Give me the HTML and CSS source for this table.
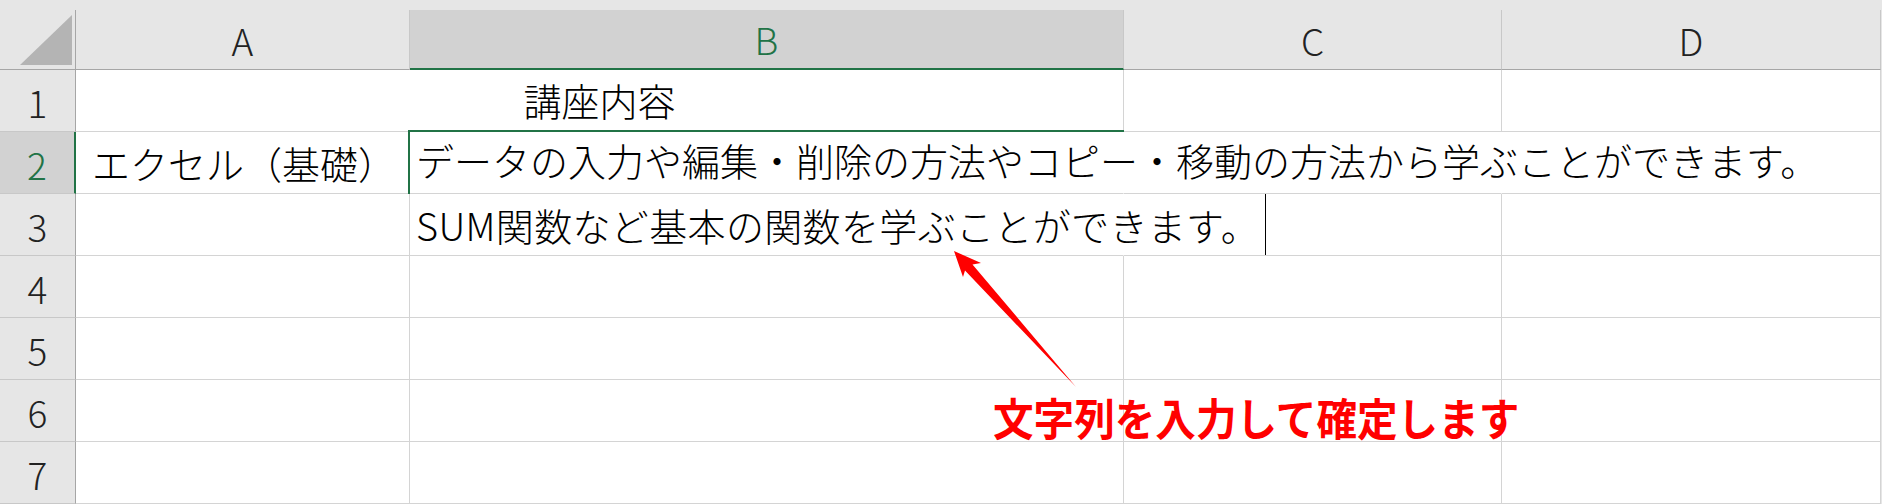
FILE: index.html
```html
<!DOCTYPE html>
<html lang="ja">
<head>
<meta charset="utf-8">
<title>Excel</title>
<link rel="stylesheet" href="styles.css">
</head>
<body>
<div class="sheet">
  <div class="topstrip"></div>
  <div class="grid">
    <div class="corner"><svg class="corner-tri" width="76" height="59" viewBox="0 0 76 59"><polygon points="20,55 72,5 72,55" fill="#b4b4b4"/></svg></div>
    <div class="ch">A</div>
    <div class="ch ch-sel">B</div>
    <div class="ch">C</div>
    <div class="ch ch-last">D</div>

    <div class="rh">1</div>
    <div class="cell merged">講座内容</div>
    <div class="cell"></div>
    <div class="cell"></div>

    <div class="rh rh-sel">2</div>
    <div class="cell indent">エクセル（基礎）</div>
    <div class="cell active no-right">データの入力や編集・削除の方法やコピー・移動の方法から学ぶことができます。</div>
    <div class="cell no-right"></div>
    <div class="cell"></div>

    <div class="rh">3</div>
    <div class="cell"></div>
    <div class="cell editing no-right"><span class="edit-text">SUM関数など基本の関数を学ぶことができます。</span><span class="caret"></span></div>
    <div class="cell"></div>
    <div class="cell"></div>

    <div class="rh">4</div>
    <div class="cell"></div><div class="cell"></div><div class="cell"></div><div class="cell"></div>
    <div class="rh">5</div>
    <div class="cell"></div><div class="cell"></div><div class="cell"></div><div class="cell"></div>
    <div class="rh">6</div>
    <div class="cell"></div><div class="cell"></div><div class="cell"></div><div class="cell"></div>
    <div class="rh">7</div>
    <div class="cell"></div><div class="cell"></div><div class="cell"></div><div class="cell"></div>
  </div>
  <div class="selection"></div>
  <svg class="arrow" width="1882" height="504" viewBox="0 0 1882 504">
    <polygon points="954,251 981,263 972.5,264.5 1076,387 965,270.5 963,277" fill="#ff0000"/>
  </svg>
  <div class="note">文字列を入力して確定します</div>
</div>
</body>
</html>
```

FILE: styles.css
```css
* { box-sizing: border-box; }

html, body {
  margin: 0;
  padding: 0;
  background: #ffffff;
}

.sheet {
  position: relative;
  width: 1882px;
  height: 504px;
  overflow: hidden;
  font-family: "Noto Sans CJK JP", "Noto Sans", sans-serif;
  color: #000;
  background: #e6e6e6;
}

.topstrip {
  height: 10px;
  background: #e6e6e6;
}

.grid {
  display: grid;
  grid-template-columns: 76px 334px 714px 378px 379px;
  grid-template-rows: 60px repeat(7, 62px);
  background: #ffffff;
  width: 1881px;
}

.corner {
  background: #e6e6e6;
  border-right: 1px solid #a6a6a6;
  border-bottom: 1px solid #a6a6a6;
}

.corner-tri { display: block; }

.ch {
  background: #e6e6e6;
  border-right: 1px solid #c8c8c8;
  border-bottom: 1px solid #a6a6a6;
  display: flex;
  align-items: center;
  justify-content: center;
  font-size: 37px;
  font-weight: 300;
  color: #222;
}

.ch-sel {
  background: #d2d2d2;
  color: #217346;
  border-bottom: 2px solid #217346;
}

.ch-last { border-right: 1px solid #c8c8c8; }

.rh {
  background: #e6e6e6;
  border-right: 1px solid #a6a6a6;
  border-bottom: 1px solid #c8c8c8;
  display: flex;
  align-items: center;
  justify-content: center;
  font-size: 37px;
  font-weight: 300;
  color: #222;
  padding-top: 2px;
}

.rh-sel {
  background: #d2d2d2;
  color: #217346;
  border-right: 2px solid #217346;
}

.cell {
  border-right: 1px solid #d4d4d4;
  border-bottom: 1px solid #d4d4d4;
  display: flex;
  align-items: center;
  white-space: nowrap;
  font-size: 38px;
  font-weight: 300;
  padding-left: 6px;
  overflow: visible;
  min-width: 0;
}

.no-right { border-right-color: transparent; }

.merged {
  grid-column: span 2;
  justify-content: center;
  padding-left: 0;
  padding-bottom: 3px;
}

.indent { padding-left: 16px; }

.active { padding-bottom: 6px; }

.editing {
  align-items: stretch;
}

.edit-text {
  align-self: center;
  flex-shrink: 0;
  letter-spacing: 0.35px;
}

.caret {
  flex: 0 0 1px;
  width: 1px;
  background: #000;
  margin-left: 6px;
}

.selection {
  position: absolute;
  left: 408px;
  top: 130px;
  width: 716px;
  height: 64px;
  border-top: 2px solid #217346;
  border-left: 2px solid #217346;
  pointer-events: none;
}

.arrow {
  position: absolute;
  left: 0;
  top: 0;
  pointer-events: none;
}

.note {
  position: absolute;
  left: 993px;
  top: 396px;
  font-size: 40.6px;
  line-height: 1;
  font-weight: 700;
  color: #ff0000;
  white-space: nowrap;
  transform: scaleY(1.08);
  transform-origin: top left;
}
```
